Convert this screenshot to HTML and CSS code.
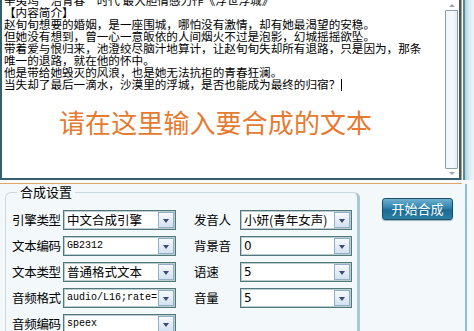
FILE: index.html
```html
<!DOCTYPE html>
<html lang="zh-CN">
<head>
    <meta charset="UTF-8">
    <link rel="stylesheet" href="styles.css">
</head>
<body>
    <div class="top-row">
        <div class="editor">
            <div class="text">
                <div class="line cut">辛夷坞“治青春”时代 最大胆情感力作《浮世浮城》</div>
                <div class="line">【内容简介】</div>
                <div class="line">赵旬旬想要的婚姻，是一座围城，哪怕没有激情，却有她最渴望的安稳。</div>
                <div class="line">但她没有想到，曾一心一意皈依的人间烟火不过是泡影，幻城摇摇欲坠。</div>
                <div class="line">带着爱与恨归来，池澄绞尽脑汁地算计，让赵旬旬失却所有退路，只是因为，那条</div>
                <div class="line">唯一的退路，就在他的怀中。</div>
                <div class="line">他是带给她毁灭的风浪，也是她无法抗拒的青春狂澜。</div>
                <div class="line">当失却了最后一滴水，沙漠里的浮城，是否也能成为最终的归宿？<span class="caret"></span></div>
                <div class="hint">请在这里输入要合成的文本</div>
            </div>
            <div class="scrollbar">
                <span class="arrow up"></span>
                <span class="thumb"></span>
                <span class="arrow down"></span>
            </div>
        </div>
        <div class="frame"></div>
    </div>
    <div class="divider"></div>
    <div class="panel">
        <fieldset class="group">
            <legend>合成设置</legend>
            <div class="grid">
                <div class="label">引擎类型</div>
                <div class="select"><span class="value">中文合成引擎</span><span class="drop"></span></div>
                <div class="label right">发音人</div>
                <div class="select"><span class="value">小妍(青年女声)</span><span class="drop"></span></div>

                <div class="label">文本编码</div>
                <div class="select"><span class="value mono">GB2312</span><span class="drop"></span></div>
                <div class="label right">背景音</div>
                <div class="select"><span class="value num">0</span><span class="drop"></span></div>

                <div class="label">文本类型</div>
                <div class="select"><span class="value">普通格式文本</span><span class="drop"></span></div>
                <div class="label right">语速</div>
                <div class="select"><span class="value num">5</span><span class="drop"></span></div>

                <div class="label">音频格式</div>
                <div class="select"><span class="value mono">audio/L16;rate=</span><span class="drop"></span></div>
                <div class="label right">音量</div>
                <div class="select"><span class="value num">5</span><span class="drop"></span></div>

                <div class="label">音频编码</div>
                <div class="select"><span class="value mono">speex</span><span class="drop"></span></div>
            </div>
        </fieldset>
        <div class="actions">
            <button class="start">开始合成</button>
        </div>
    </div>
</body>
</html>
```

FILE: styles.css
```css
body {
    margin: 0;
    width: 474px;
    height: 331px;
    overflow: hidden;
    background: #f3f8fb;
    font-family: "Noto Sans CJK SC", "Liberation Sans", sans-serif;
    color: #000;
}
.top-row {
    display: flex;
    height: 180px;
}
.editor {
    width: 461px;
    box-sizing: border-box;
    border: 2px solid #33606c;
    border-top: none;
    background: #fff;
    display: flex;
    overflow: hidden;
}
.text {
    flex: 1;
    padding: 0 0 0 2px;
    font-size: 11.6px;
    line-height: 12px;
    white-space: nowrap;
    overflow: hidden;
}
.line.cut {
    margin-top: -6px;
}
.caret {
    display: inline-block;
    width: 1px;
    height: 12px;
    background: #000;
    vertical-align: -2px;
    margin-left: 1px;
}
.hint {
    margin-top: 16px;
    padding-left: 55px;
    font-size: 26px;
    line-height: 30px;
    letter-spacing: 0.1px;
    color: #e57a30;
}
.scrollbar {
    width: 15px;
    display: flex;
    flex-direction: column;
    align-items: center;
    background: #fff;
}
.arrow {
    width: 0;
    height: 0;
    border-left: 3px solid transparent;
    border-right: 3px solid transparent;
    margin: 4px 0 3px;
}
.arrow.up {
    border-bottom: 3px solid #9aa4aa;
}
.arrow.down {
    border-top: 3px solid #9aa4aa;
    margin: 3px 0 3px;
}
.thumb {
    flex: 1;
    width: 11px;
    border: 1px solid #8c9ea8;
    border-radius: 1px;
    background: linear-gradient(to right, #eef4f8, #f8fbfd 60%, #e4edf3);
}
.frame {
    flex: 1;
    background: linear-gradient(to right, #c89a5e 0, #c89a5e 1px, #fff 1px, #fff 2px, #4f8c98 2px, #4f8c98 4px, #a8d4dc 4px, #d7ecf1 8px, #eef7fa 13px);
}
.divider {
    height: 4px;
    width: 462px;
    box-sizing: border-box;
    border-bottom: 1px solid #e0a36a;
    background: #f7fafc;
}
.panel {
    display: flex;
    align-items: flex-start;
    height: 147px;
    width: 467px;
    box-sizing: border-box;
    border-right: 2px solid #8fbdd6;
}
.group {
    margin: 0 0 0 5px;
    padding: 10px 5px 0 6px;
    width: 354px;
    height: 150px;
    box-sizing: border-box;
    border: 1px solid #cad7df;
    border-right: 3px solid #a9c6d8;
    border-radius: 6px 6px 0 0;
}
.group legend {
    padding: 0 3px;
    margin-left: 5px;
    font-size: 13px;
    line-height: 16px;
}
.grid {
    display: grid;
    grid-template-columns: 51px 113px 18px 46px 112px;
    row-gap: 6px;
    align-items: center;
}
.label {
    font-size: 12.5px;
    line-height: 20px;
    letter-spacing: -0.3px;
}
.label.right {
    grid-column: 4;
}
.select {
    height: 20px;
    box-sizing: border-box;
    border: 1px solid #52777c;
    box-shadow: inset 0 0 0 1px #b9ccd0;
    background: #fff;
    display: flex;
    align-items: center;
    padding: 0 1px 0 3px;
}
.value {
    flex: 1;
    font-size: 12.5px;
    line-height: 16px;
    white-space: nowrap;
    overflow: hidden;
}
.value.mono {
    font-family: "Liberation Mono", monospace;
    font-size: 10px;
}
.value.num {
    font-family: "DejaVu Sans", sans-serif;
    font-size: 12px;
}
.drop {
    width: 16px;
    height: 16px;
    box-sizing: border-box;
    border: 1px solid #93adc4;
    background: linear-gradient(#f6f9fd, #d2e2f1);
    position: relative;
}
.drop::after {
    content: "";
    position: absolute;
    left: 4px;
    top: 6px;
    border-left: 3.5px solid transparent;
    border-right: 3.5px solid transparent;
    border-top: 4px solid #3b4a72;
}
.actions {
    flex: 1;
    display: flex;
    justify-content: center;
    padding: 14px 0 0 10px;
}
.start {
    width: 71px;
    height: 22px;
    border: 1px solid #1f4f68;
    border-radius: 3px;
    background: linear-gradient(#6db0cf, #2f82aa 45%, #1e6a92 55%, #2a7ea6);
    color: #fff;
    font-family: "Noto Sans CJK SC", sans-serif;
    font-size: 13px;
    line-height: 18px;
    padding: 0;
    box-shadow: 0 1px 1px #9ab4c4;
}
```
